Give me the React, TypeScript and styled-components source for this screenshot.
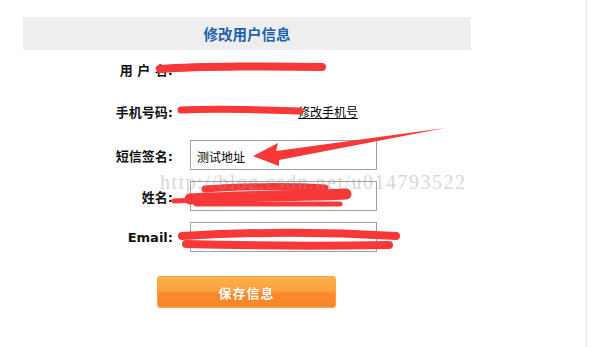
import React from "react";
import styled, { createGlobalStyle } from "styled-components";

const GlobalStyle = createGlobalStyle`
  html, body {
    margin: 0;
    padding: 0;
    background: #fff;
    font-family: "DejaVu Sans", "Noto Sans CJK SC", sans-serif;
  }
`;

const Page = styled.div`
  position: relative;
  width: 586px;
  height: 347px;
  border-right: 1px solid #e4e4e4;
  overflow: hidden;
`;

const Panel = styled.div`
  padding: 17px 0 0 23px;
  width: 448px;
`;

const Header = styled.div`
  height: 33px;
  background: #eeeeee;
  display: flex;
  align-items: center;
  justify-content: center;
  color: #1a62b0;
  font-family: "Noto Sans CJK SC", sans-serif;
  font-size: 14.5px;
  font-weight: 700;
`;

const Form = styled.div`
  display: flex;
  flex-direction: column;
`;

const Row = styled.div<{ $h: number; $top?: number }>`
  display: flex;
  align-items: center;
  height: ${(p) => p.$h}px;
  margin-top: ${(p) => p.$top ?? 0}px;
`;

const Label = styled.div`
  width: 150px;
  flex-shrink: 0;
  text-align: right;
  font-size: 13px;
  font-weight: 700;
  color: #111;
  white-space: pre;
`;

// redacted values: the red marks drawn over the page hide them
const Value = styled.span<{ $w?: number }>`
  margin-left: 7px;
  display: inline-block;
  width: ${(p) => (p.$w ? `${p.$w}px` : "auto")};
  font-size: 12px;
  color: #222;
`;

const Link = styled.a`
  font-family: "Noto Sans CJK SC", sans-serif;
  font-size: 12px;
  color: #000;
  text-decoration: underline;
  cursor: pointer;
`;

const Input = styled.input`
  box-sizing: border-box;
  margin: 0 0 0 17px;
  width: 187px;
  height: 30px;
  border: 1px solid #a0a0a0;
  padding: 2px 0 0 6px;
  font-family: "Noto Sans CJK SC", sans-serif;
  font-size: 12px;
  color: #000;
  outline: none;
  background: #fff;
`;

const SaveButton = styled.button`
  margin: 24px 0 0 134px;
  width: 179px;
  height: 32px;
  border: 1px solid #f5a44a;
  border-radius: 3px;
  background: linear-gradient(
    to bottom,
    #fdb24c 0%,
    #fca03c 45%,
    #f98b2b 55%,
    #f8862a 100%
  );
  color: #fff;
  font-family: "Noto Sans CJK SC", sans-serif;
  font-size: 13px;
  font-weight: 700;
  letter-spacing: 1px;
  text-shadow: 0 0 1px rgba(180, 80, 0, 0.4);
  cursor: pointer;
`;

const Watermark = styled.div`
  position: absolute;
  left: 160px;
  top: 171px;
  font-family: "Liberation Serif", serif;
  font-size: 20px;
  letter-spacing: 1.5px;
  color: rgba(150, 150, 150, 0.4);
  pointer-events: none;
  white-space: nowrap;
`;

const Marks = styled.svg`
  position: absolute;
  left: 0;
  top: 0;
  pointer-events: none;
`;

export default function App() {
  return (
    <>
      <GlobalStyle />
      <Page>
        <Panel>
          <Header>修改用户信息</Header>
          <Form>
            <Row $h={38}>
              <Label>用 户 名:</Label>
              <Value />
            </Row>
            <Row $h={46}>
              <Label>手机号码:</Label>
              <Value $w={118} />
              <Link>修改手机号</Link>
            </Row>
            <Row $h={30} $top={6}>
              <Label>短信签名:</Label>
              <Input defaultValue="测试地址" />
            </Row>
            <Row $h={30} $top={11}>
              <Label>姓名:</Label>
              <Input defaultValue="" />
            </Row>
            <Row $h={30} $top={11}>
              <Label>Email:</Label>
              <Input defaultValue="" />
            </Row>
          </Form>
          <SaveButton>保存信息</SaveButton>
        </Panel>

        <Marks width="603" height="347" viewBox="0 0 603 347">
          <g stroke="#f83838" strokeLinecap="round" fill="none">
            <path d="M160 69 C 200 66, 280 66, 322 67" strokeWidth="8" />
            <path d="M181 110 C 220 108, 270 110, 300 111" strokeWidth="7" />
            <path d="M174 201 L 200 200" strokeWidth="5" />
            <path d="M190 199 C 240 196, 300 196, 346 194" strokeWidth="11" />
            <path d="M205 189 C 240 186, 290 186, 325 188" strokeWidth="7" />
            <path d="M196 204 L 340 204" strokeWidth="5" />
            <path d="M182 236 C 250 232, 330 232, 396 236" strokeWidth="8" />
            <path d="M186 244 C 260 246, 330 246, 389 245" strokeWidth="8" />
          </g>
          <polygon
            points="253,156 278,143 276,151 445,128 279,160 279,166"
            fill="#f83838"
          />
        </Marks>
        <Watermark>http://blog.csdn.net/u014793522</Watermark>
      </Page>
    </>
  );
}
